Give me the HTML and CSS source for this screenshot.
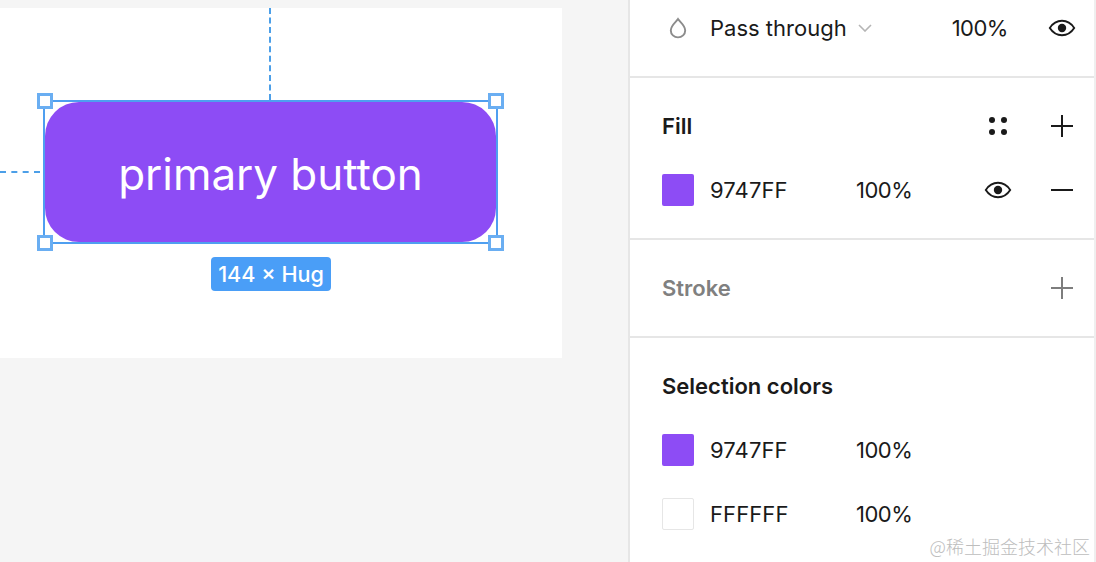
FILE: index.html
```html
<!DOCTYPE html>
<html lang="en">
<head>
<meta charset="utf-8">
<title>Primary button</title>
<link rel="stylesheet" href="styles.css">
</head>
<body>
<main class="canvas">
  <div class="artboard">
    <span class="guide guide-v"></span>
    <span class="guide guide-h"></span>
    <div class="selection">
      <button class="primary"><span class="primary-text">primary button</span></button>
      <span class="handle tl"></span>
      <span class="handle tr"></span>
      <span class="handle bl"></span>
      <span class="handle br"></span>
    </div>
    <div class="size-row"><span class="size-label">144 × Hug</span></div>
  </div>
</main>
<aside class="panel">
  <section class="section layer">
    <div class="row">
      <span class="slot-icon">
        <svg width="18" height="22" viewBox="0 0 18 22"><path d="M9 2 C7 5 1.8 8.4 1.8 13.4 a7.2 7 0 0 0 14.4 0 C16.2 8.4 11 5 9 2 Z" fill="none" stroke="#8c8c8c" stroke-width="1.9"/></svg>
      </span>
      <span class="blend">Pass through</span>
      <svg class="chevron" width="14" height="8" viewBox="0 0 14 8"><path d="M1 1 L7 7 L13 1" fill="none" stroke="#b5b5b5" stroke-width="1.6"/></svg>
      <span class="pct pct-layer">100%</span>
      <span class="icon-btn">
        <svg width="28" height="20" viewBox="0 0 28 20"><path d="M1.8 10 C5 5 9 2.8 14 2.8 S23 5 26.2 10 C23 15 19 17.2 14 17.2 S5 15 1.8 10 Z" fill="none" stroke="#1a1a1a" stroke-width="1.9"/><circle cx="14" cy="10" r="4.2" fill="#1a1a1a"/></svg>
      </span>
    </div>
  </section>

  <section class="section fill">
    <div class="row head">
      <h2 class="title">Fill</h2>
      <span class="icon-btn styles-btn">
        <svg width="22" height="22" viewBox="0 0 22 22" fill="#1a1a1a"><circle cx="5" cy="5" r="3"/><circle cx="17" cy="5" r="3"/><circle cx="5" cy="17" r="3"/><circle cx="17" cy="17" r="3"/></svg>
      </span>
      <span class="icon-btn">
        <svg width="22" height="22" viewBox="0 0 22 22"><path d="M0 11 H22 M11 0 V22" stroke="#1a1a1a" stroke-width="2"/></svg>
      </span>
    </div>
    <div class="row color">
      <span class="swatch purple"></span>
      <span class="hex">9747FF</span>
      <span class="pct">100%</span>
      <span class="icon-btn eye-slot">
        <svg width="28" height="20" viewBox="0 0 28 20"><path d="M1.8 10 C5 5 9 2.8 14 2.8 S23 5 26.2 10 C23 15 19 17.2 14 17.2 S5 15 1.8 10 Z" fill="none" stroke="#1a1a1a" stroke-width="1.9"/><circle cx="14" cy="10" r="4.2" fill="#1a1a1a"/></svg>
      </span>
      <span class="icon-btn">
        <svg width="22" height="22" viewBox="0 0 22 22"><path d="M0 11 H22" stroke="#1a1a1a" stroke-width="2"/></svg>
      </span>
    </div>
  </section>

  <section class="section stroke">
    <div class="row head">
      <h2 class="title muted">Stroke</h2>
      <span class="icon-btn">
        <svg width="22" height="22" viewBox="0 0 22 22"><path d="M0 11 H22 M11 0 V22" stroke="#7d7d7d" stroke-width="2"/></svg>
      </span>
    </div>
  </section>

  <section class="section colors">
    <div class="row head">
      <h2 class="title">Selection colors</h2>
    </div>
    <div class="row color">
      <span class="swatch purple"></span>
      <span class="hex">9747FF</span>
      <span class="pct">100%</span>
    </div>
    <div class="row color">
      <span class="swatch blank"></span>
      <span class="hex">FFFFFF</span>
      <span class="pct">100%</span>
    </div>
  </section>
  <span class="watermark">@稀土掘金技术社区</span>
</aside>
</body>
</html>
```
FILE: styles.css
```css
* { box-sizing: border-box; }
html, body { height: 100%; }
body {
  margin: 0;
  display: flex;
  height: 562px;
  overflow: hidden;
  background: #f5f5f5;
  font-family: Inter, "Noto Sans CJK SC", sans-serif;
  color: #1a1a1a;
}
.canvas {
  width: 629px;
  flex: none;
  padding-top: 8px;
}
.artboard {
  position: relative;
  width: 562px;
  height: 350px;
  background: #fff;
  padding: 92px 0 0 43px;
}
.guide { position: absolute; }
.guide-v {
  left: 269px;
  top: 0;
  height: 92px;
  border-left: 2px dashed #4c9fe8;
}
.guide-h {
  left: 0;
  top: 163px;
  width: 40px;
  border-top: 2px dashed #4c9fe8;
}
.selection {
  position: relative;
  width: 455px;
  height: 144px;
  border: 2px solid #4f9ff0;
}
.primary {
  display: block;
  width: 451px;
  height: 140px;
  margin: 0;
  border: 0;
  border-radius: 34px;
  background: #8d4cf5;
  color: #fff;
  font: 400 44px/1 Inter, sans-serif;
  padding: 3px 0 0;
}
.primary-text { letter-spacing: -0.03px; }
.handle {
  position: absolute;
  width: 16px;
  height: 16px;
  background: #fff;
  border: 3px solid #6aaef2;
}
.tl { left: -8px; top: -9px; }
.tr { right: -8px; top: -9px; }
.bl { left: -8px; bottom: -9px; }
.br { right: -8px; bottom: -9px; }
.size-row {
  display: flex;
  justify-content: center;
  width: 456px;
  margin-top: 13px;
}
.size-label {
  width: 120px;
  height: 34px;
  border-radius: 4px;
  background: #4a9ef7;
  color: #fff;
  font-size: 21.6px;
  font-weight: 450;
  line-height: 34px;
  text-align: center;
  white-space: nowrap;
}
.panel {
  position: relative;
  flex: 1;
  background: #fff;
  border-left: 2px solid #e6e6e6;
  border-right: 2px solid #efefef;
  font-size: 22px;
  margin-left: -1px;
}
.section {
  border-bottom: 2px solid #e6e6e6;
  padding: 0 16px 0 32px;
}
.layer { height: 78px; padding-top: 4px; }
.fill { height: 162px; padding-top: 16px; }
.stroke { height: 98px; padding-top: 16px; }
.colors { border-bottom: 0; padding-top: 16px; }
.row {
  display: flex;
  align-items: center;
  height: 64px;
}
.layer .row { height: 48px; }
.head .title { margin-right: auto; }
.title {
  margin: 0;
  font-size: 22px;
  font-weight: 600;
  line-height: 1;
}
.muted { color: #808080; }
.icon-btn {
  display: flex;
  align-items: center;
  justify-content: center;
  flex: none;
  width: 32px;
  height: 32px;
}
.slot-icon {
  display: flex;
  justify-content: center;
  width: 32px;
  margin-right: 16px;
}
.blend { white-space: nowrap; }
.chevron { margin-left: 11px; }
.pct { letter-spacing: -0.5px; }
.pct-layer { margin-left: 80px; margin-right: auto; }
.styles-btn { margin-right: 32px; }
.eye-slot { margin-right: 32px; }
.swatch {
  flex: none;
  width: 32px;
  height: 32px;
  border-radius: 2px;
  margin-right: 16px;
}
.purple { background: #8d4cf5; }
.blank { background: #fff; border: 1px solid #e6e6e6; }
.hex { width: 146px; flex: none; letter-spacing: 0.1px; }
.color .pct { margin-right: auto; }
.watermark {
  position: absolute;
  right: 4px;
  bottom: 4px;
  font-family: "Noto Sans CJK SC", sans-serif;
  font-size: 18px;
  font-weight: 300;
  line-height: 24px;
  color: #bdbdbd;
  white-space: nowrap;
}
```
